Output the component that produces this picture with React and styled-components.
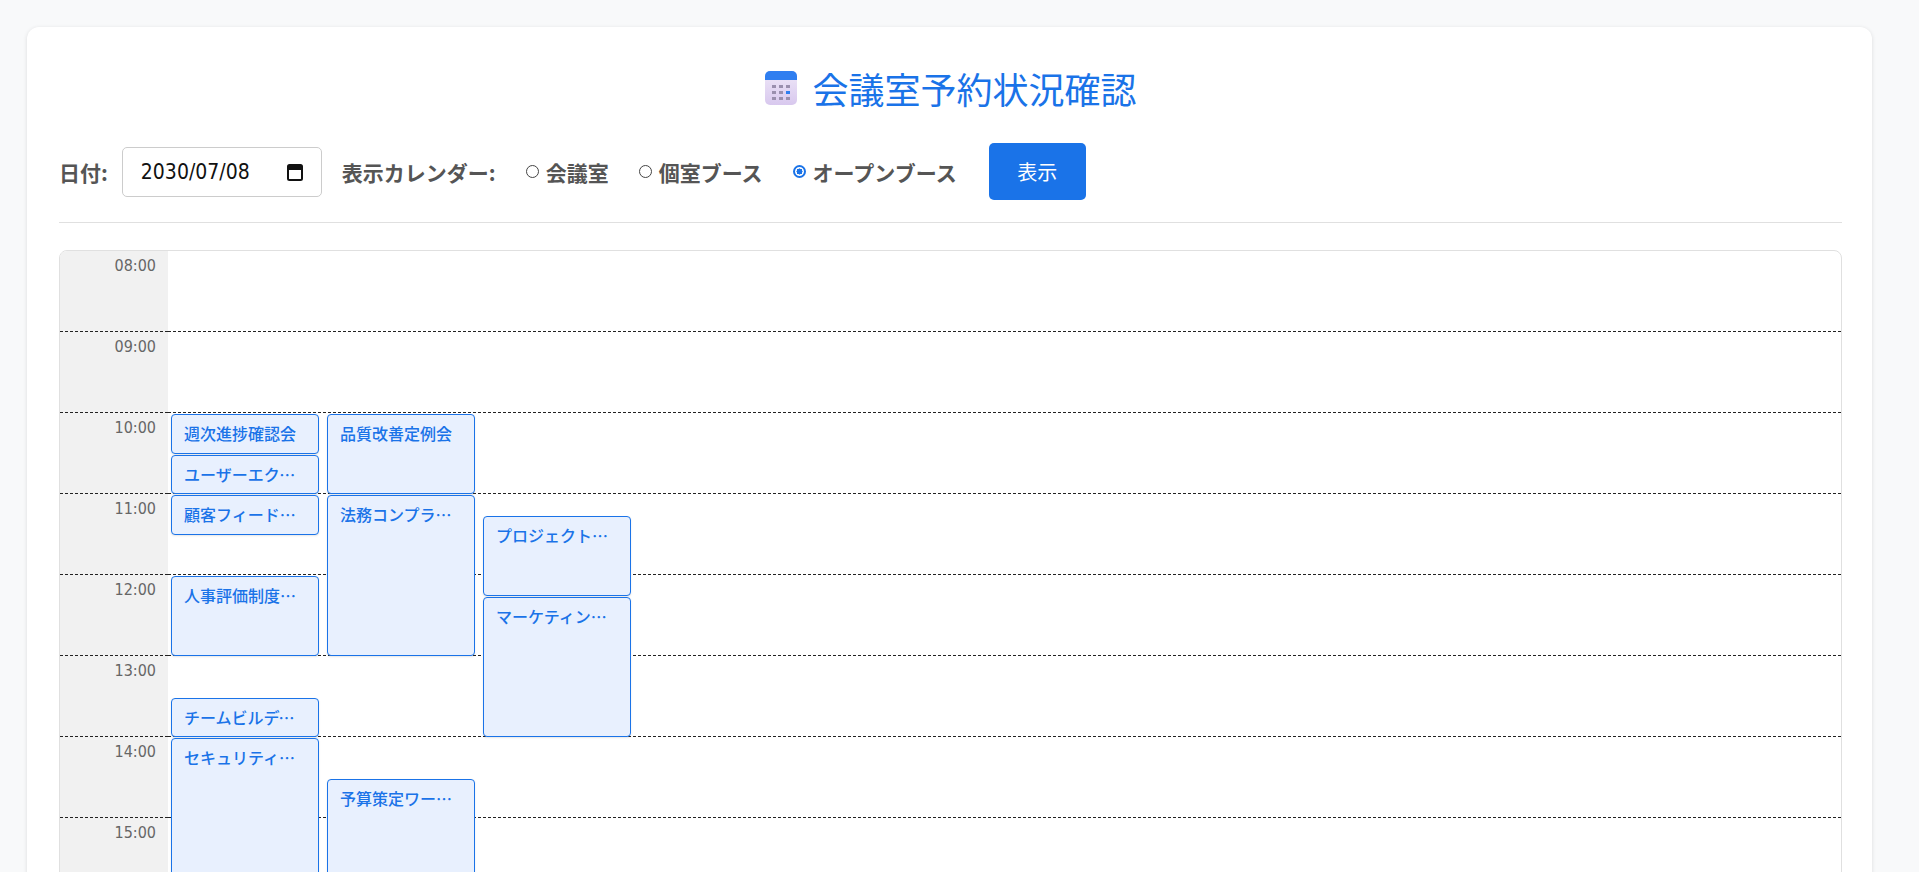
import styled, { createGlobalStyle } from "styled-components";

const Global = createGlobalStyle`
  body { margin: 0; background: #f8f9fa; font-family: "Noto Sans CJK JP", "Noto Sans", sans-serif; }
`;

const Page = styled.div`
  padding: 27px 47px 0 27px;
`;

const Card = styled.div`
  background: #fff;
  border-radius: 12px;
  box-shadow: 0 1px 4px rgba(0, 0, 0, 0.12);
  padding: 36px 30px 32px 32px;
`;

const Title = styled.h1`
  margin: 0 0 30px;
  display: flex;
  justify-content: center;
  align-items: center;
  gap: 14px;
  font-size: 36px;
  font-weight: 400;
  color: #1a73e8;
  line-height: 1.4;
`;

const Controls = styled.div`
  display: flex;
  align-items: center;
  gap: 14px;
  padding-bottom: 22px;
  border-bottom: 1px solid #e0e0e0;
  margin-bottom: 27px;
`;

const Label = styled.span`
  font-size: 21px;
  font-weight: 700;
  color: #555;
  margin-left: ${(p) => p.$ml || 0}px;
`;

const DateBox = styled.div`
  width: 200px;
  height: 50px;
  box-sizing: border-box;
  border: 1px solid #ccc;
  border-radius: 5px;
  display: flex;
  align-items: center;
  justify-content: space-between;
  padding: 0 18px;
  font-family: "DejaVu Sans Condensed", "DejaVu Sans", sans-serif;
  font-size: 21px;
  color: #111;
`;

const Radio = styled.label`
  display: flex;
  align-items: center;
  gap: 7px;
  font-size: 21px;
  font-weight: 700;
  color: #555;
  margin-left: 16px;
`;

const Dot = styled.span`
  width: 13px;
  height: 13px;
  border-radius: 50%;
  box-sizing: border-box;
  border: ${(p) => (p.$on ? "2px solid #1a73e8" : "1px solid #444")};
  background: ${(p) => (p.$on ? "radial-gradient(#1a73e8 45%, #fff 50%)" : "#fff")};
`;

const Button = styled.button`
  margin-left: 18px;
  width: 97px;
  height: 57px;
  border: none;
  border-radius: 5px;
  background: #1a73e8;
  color: #fff;
  font-size: 20px;
  font-family: inherit;
`;

const Calendar = styled.div`
  border: 1px solid #e0e0e0;
  border-radius: 8px;
  display: grid;
  grid-template-columns: 108px 1fr;
  overflow: hidden;
`;

const TimeCol = styled.div`
  background: #f1f1f1;
`;

const TimeCell = styled.div`
  border-bottom: 1px dashed #222;
  text-align: right;
  padding: 5px 12px 0 0;
  box-sizing: border-box;
  font-size: 16px;
  color: #666;
  font-family: "DejaVu Sans Condensed", "DejaVu Sans", sans-serif;
`;

const Grid = styled.div`
  position: relative;
`;

const Line = styled.div`
  box-sizing: border-box;
  border-bottom: 1px dashed #222;
`;

const Event = styled.div`
  position: absolute;
  box-sizing: border-box;
  width: 148px;
  background: #e8f0fe;
  border: 1px solid #1a73e8;
  border-radius: 4px;
  padding: 6px 12px;
  font-size: 16px;
  font-weight: 500;
  color: #1a73e8;
  white-space: nowrap;
  overflow: hidden;
  text-overflow: ellipsis;
  box-shadow: 0 1px 2px rgba(0, 0, 0, 0.1);
`;

const hours = Array.from({ length: 12 }, (_, i) => `${String(8 + i).padStart(2, "0")}:00`);

const events = [
  { c: 0, s: 10, e: 10.5, t: "週次進捗確認会" },
  { c: 0, s: 10.5, e: 11, t: "ユーザーエクスペリエンス" },
  { c: 0, s: 11, e: 11.5, t: "顧客フィードバック" },
  { c: 0, s: 12, e: 13, t: "人事評価制度説明会" },
  { c: 0, s: 13.5, e: 14, t: "チームビルディング" },
  { c: 0, s: 14, e: 16, t: "セキュリティ研修" },
  { c: 1, s: 10, e: 11, t: "品質改善定例会" },
  { c: 1, s: 11, e: 13, t: "法務コンプライアンス" },
  { c: 1, s: 14.5, e: 16, t: "予算策定ワークショップ" },
  { c: 2, s: 11.25, e: 12.25, t: "プロジェクト定例" },
  { c: 2, s: 12.25, e: 14, t: "マーケティング戦略" },
];

const H = 81;

function CalIcon() {
  return (
    <svg width="34" height="38" viewBox="0 0 34 38">
      <defs>
        <linearGradient id="g" x1="0" y1="0" x2="0" y2="1">
          <stop offset="0" stopColor="#efe8f8" />
          <stop offset="1" stopColor="#d8c8ee" />
        </linearGradient>
      </defs>
      <rect x="1" y="2" width="32" height="34" rx="5" fill="url(#g)" />
      <path d="M1 7a5 5 0 0 1 5-5h22a5 5 0 0 1 5 5v4H1z" fill="#2f7ef0" />
      {[0, 1, 2].map((r) =>
        [0, 1, 2].map((c) => (
          <rect key={r + "" + c} x={8 + c * 7} y={16 + r * 6} width="4" height="3" fill={r === 1 && c === 2 ? "#2f7ef0" : "#9a8fae"} />
        ))
      )}
    </svg>
  );
}

export default function App() {
  return (
    <>
      <Global />
      <Page>
        <Card>
          <Title>
            <CalIcon />
            会議室予約状況確認
          </Title>
          <Controls>
            <Label>日付:</Label>
            <DateBox>
              2030/07/08
              <svg width="16" height="18" viewBox="0 0 16 18">
                <rect x="1" y="2" width="14" height="15" rx="1.5" fill="none" stroke="#111" strokeWidth="2" />
                <rect x="1" y="2" width="14" height="5" fill="#111" />
              </svg>
            </DateBox>
            <Label $ml={6}>表示カレンダー:</Label>
            <Radio><Dot />会議室</Radio>
            <Radio><Dot />個室ブース</Radio>
            <Radio><Dot $on />オープンブース</Radio>
            <Button>表示</Button>
          </Controls>
          <Calendar>
            <TimeCol>
              {hours.map((h) => (
                <TimeCell key={h} style={{ height: H }}>{h}</TimeCell>
              ))}
            </TimeCol>
            <Grid>
              {hours.map((h) => (
                <Line key={h} style={{ height: H }} />
              ))}
              {events.map((ev) => (
                <Event
                  key={ev.t}
                  style={{
                    left: 3 + ev.c * 156,
                    top: (ev.s - 8) * H + 1,
                    height: (ev.e - ev.s) * H - 1,
                  }}
                >
                  {ev.t}
                </Event>
              ))}
            </Grid>
          </Calendar>
        </Card>
      </Page>
    </>
  );
}
